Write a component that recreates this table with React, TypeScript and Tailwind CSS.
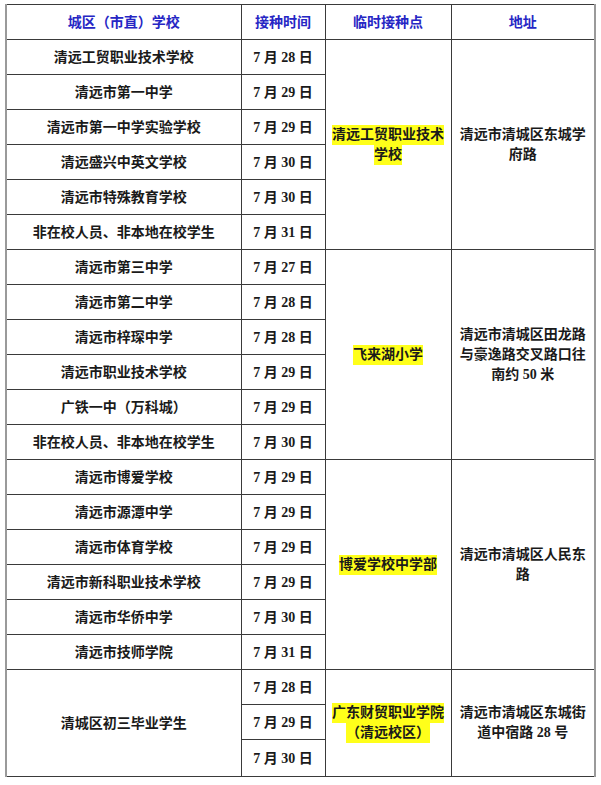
import React from "react";

type Group = {
  rows: { school?: string; date: string }[];
  site: string[];
  address: string[];
  schoolSpan?: string;
};

const groups: Group[] = [
  {
    rows: [
      { school: "清远工贸职业技术学校", date: "7 月 28 日" },
      { school: "清远市第一中学", date: "7 月 29 日" },
      { school: "清远市第一中学实验学校", date: "7 月 29 日" },
      { school: "清远盛兴中英文学校", date: "7 月 30 日" },
      { school: "清远市特殊教育学校", date: "7 月 30 日" },
      { school: "非在校人员、非本地在校学生", date: "7 月 31 日" },
    ],
    site: ["清远工贸职业技术", "学校"],
    address: ["清远市清城区东城学", "府路"],
  },
  {
    rows: [
      { school: "清远市第三中学", date: "7 月 27 日" },
      { school: "清远市第二中学", date: "7 月 28 日" },
      { school: "清远市梓琛中学", date: "7 月 28 日" },
      { school: "清远市职业技术学校", date: "7 月 29 日" },
      { school: "广铁一中（万科城）", date: "7 月 29 日" },
      { school: "非在校人员、非本地在校学生", date: "7 月 30 日" },
    ],
    site: ["飞来湖小学"],
    address: ["清远市清城区田龙路", "与豪逸路交叉路口往", "南约 50 米"],
  },
  {
    rows: [
      { school: "清远市博爱学校", date: "7 月 29 日" },
      { school: "清远市源潭中学", date: "7 月 29 日" },
      { school: "清远市体育学校", date: "7 月 29 日" },
      { school: "清远市新科职业技术学校", date: "7 月 29 日" },
      { school: "清远市华侨中学", date: "7 月 30 日" },
      { school: "清远市技师学院", date: "7 月 31 日" },
    ],
    site: ["博爱学校中学部"],
    address: ["清远市清城区人民东", "路"],
  },
  {
    rows: [{ date: "7 月 28 日" }, { date: "7 月 29 日" }, { date: "7 月 30 日" }],
    schoolSpan: "清城区初三毕业学生",
    site: ["广东财贸职业学院", "（清远校区）"],
    address: ["清远市清城区东城街", "道中宿路 28 号"],
  },
];

const cell = "border border-[#3a3a3a] text-center align-middle p-0";

const Highlight = ({ lines }: { lines: string[] }) => (
  <div className="flex flex-col items-center leading-[20px]">
    {lines.map((l) => (
      <span key={l} className="bg-[#ffff1a]">
        {l}
      </span>
    ))}
  </div>
);

export default function App() {
  return (
    <div
      className="h-[785px] w-[601px] bg-white pl-[5px] pt-[4px] text-[14px] font-bold text-[#1a1a1a]"
      style={{ fontFamily: '"Liberation Serif", "Noto Sans CJK SC", serif' }}
    >
      <table className="w-[589px] table-fixed border-collapse border-l-2 border-r-2 border-l-[#9a9a9a] border-r-[#9a9a9a]">
        <colgroup>
          <col className="w-[235px]" />
          <col className="w-[84px]" />
          <col className="w-[126px]" />
          <col className="w-[144px]" />
        </colgroup>
        <thead>
          <tr className="h-[35px] text-[#2626c4]">
            <th className={cell}>城区（市直）学校</th>
            <th className={cell}>接种时间</th>
            <th className={cell}>临时接种点</th>
            <th className={cell}>地址</th>
          </tr>
        </thead>
        <tbody>
          {groups.map((g, gi) =>
            g.rows.map((r, ri) => (
              <tr
                key={`${gi}-${ri}`}
                className={gi === 3 ? (ri === 2 ? "h-[37px]" : "h-[35px]") : "h-[35px]"}
              >
                {g.schoolSpan ? (
                  ri === 0 ? (
                    <td className={cell} rowSpan={g.rows.length}>
                      {g.schoolSpan}
                    </td>
                  ) : null
                ) : (
                  <td className={cell}>{r.school}</td>
                )}
                <td className={cell}>{r.date}</td>
                {ri === 0 ? (
                  <>
                    <td className={cell} rowSpan={g.rows.length}>
                      <Highlight lines={g.site} />
                    </td>
                    <td className={`${cell} px-2 leading-[20px]`} rowSpan={g.rows.length}>
                      {g.address.map((a) => (
                        <div key={a}>{a}</div>
                      ))}
                    </td>
                  </>
                ) : null}
              </tr>
            ))
          )}
        </tbody>
      </table>
    </div>
  );
}
